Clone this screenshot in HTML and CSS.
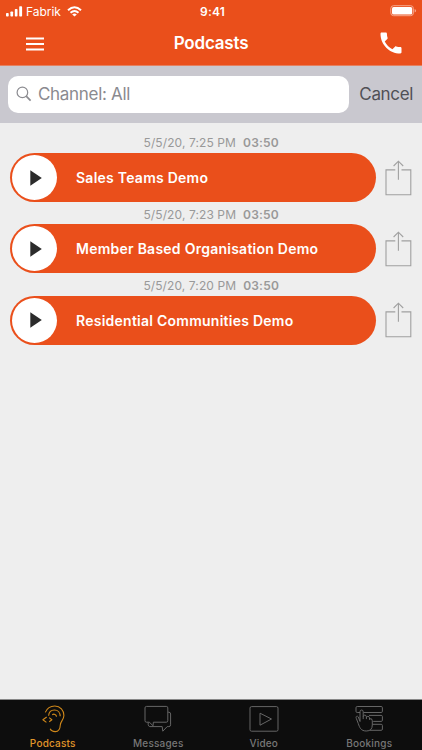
FILE: index.html
```html
<!DOCTYPE html>
<html lang="en">
<head>
<meta charset="utf-8">
<title>Podcasts</title>
<link rel="stylesheet" href="styles.css">
</head>
<body>
<div class="app">
  <header class="top">
    <div class="status">
      <div class="carrier">
        <svg width="17" height="11" viewBox="0 0 17 11" fill="#fff"><rect x="0" y="7" width="2.7" height="3.6" rx=".8"/><rect x="4.4" y="5.4" width="2.7" height="5.2" rx=".8"/><rect x="8.8" y="3" width="2.7" height="7.6" rx=".8"/><rect x="13.2" y="0.2" width="2.9" height="10.4" rx=".8"/></svg>
        <span class="carrier-name">Fabrik</span>
        <svg width="15" height="11" viewBox="0 0 15 11" fill="none" stroke="#fff" stroke-width="2"><path d="M1 4.2Q7.5-1.8 14 4.2"/><path d="M3.5 6.8Q7.5 3.2 11.5 6.8"/><path d="M7.5 10.6L5.2 8.4Q7.5 6.6 9.8 8.4Z" fill="#fff" stroke="none"/></svg>
      </div>
      <div class="clock">9:41</div>
      <svg class="battery" width="27" height="12" viewBox="0 0 27 12"><rect x=".8" y=".7" width="22.6" height="10" rx="2.8" fill="none" stroke="#f7a78c" stroke-width="1"/><rect x="2" y="1.9" width="20.2" height="7.6" rx="1.6" fill="#fff"/><path d="M24.6 4v3.6q1.5-.6 1.5-1.8T24.6 4z" fill="#f7a78c"/></svg>
    </div>
    <div class="nav">
      <svg width="20" height="14" viewBox="0 0 20 14" stroke="#fff" stroke-width="2"><path d="M1 1.6h18M1 7h18M1 12.4h18"/></svg>
      <h1>Podcasts</h1>
      <svg class="phone" width="28" height="28" viewBox="0 0 24 24" fill="#fff"><path d="M6.62 10.79c1.44 2.83 3.76 5.14 6.59 6.59l2.2-2.2c.27-.27.67-.36 1.02-.24 1.12.37 2.33.57 3.57.57.55 0 1 .45 1 1V20c0 .55-.45 1-1 1-9.39 0-17-7.61-17-17 0-.55.45-1 1-1h3.5c.55 0 1 .45 1 1 0 1.25.2 2.45.57 3.57.11.35.03.74-.25 1.02l-2.2 2.2z"/></svg>
    </div>
  </header>
  <div class="search">
    <div class="field">
      <svg width="16" height="16" viewBox="0 0 16 16" fill="none" stroke="#8b8b90" stroke-width="1.2"><circle cx="6.4" cy="6.4" r="5.3"/><path d="M10.2 10.2L14.6 14.6" stroke-width="1.7"/></svg>
      <span>Channel: All</span>
    </div>
    <span class="cancel">Cancel</span>
  </div>
  <main>
    <section class="item">
      <div class="meta"><span>5/5/20, 7:25 PM</span><b>03:50</b></div>
      <div class="row">
        <div class="pill"><div class="play"><svg width="12" height="16" viewBox="0 0 12 16"><path d="M.3.3L11.8 8 .3 15.7z" fill="#2b2b2b"/></svg></div><span>Sales Teams Demo</span></div>
        <svg class="share" width="27" height="36" viewBox="0 0 27 36"><path d="M10.3 9.9H1v24.8h24.8V9.9h-9.3M13.4 19.8V1.2M8.6 6l4.8-4.8L18.2 6"/></svg>
      </div>
    </section>
    <section class="item">
      <div class="meta"><span>5/5/20, 7:23 PM</span><b>03:50</b></div>
      <div class="row">
        <div class="pill"><div class="play"><svg width="12" height="16" viewBox="0 0 12 16"><path d="M.3.3L11.8 8 .3 15.7z" fill="#2b2b2b"/></svg></div><span>Member Based Organisation Demo</span></div>
        <svg class="share" width="27" height="36" viewBox="0 0 27 36"><path d="M10.3 9.9H1v24.8h24.8V9.9h-9.3M13.4 19.8V1.2M8.6 6l4.8-4.8L18.2 6"/></svg>
      </div>
    </section>
    <section class="item">
      <div class="meta"><span>5/5/20, 7:20 PM</span><b>03:50</b></div>
      <div class="row">
        <div class="pill"><div class="play"><svg width="12" height="16" viewBox="0 0 12 16"><path d="M.3.3L11.8 8 .3 15.7z" fill="#2b2b2b"/></svg></div><span>Residential Communities Demo</span></div>
        <svg class="share" width="27" height="36" viewBox="0 0 27 36"><path d="M10.3 9.9H1v24.8h24.8V9.9h-9.3M13.4 19.8V1.2M8.6 6l4.8-4.8L18.2 6"/></svg>
      </div>
    </section>
  </main>
  <nav class="tabs">
    <div class="tab active"><svg width="30" height="28" viewBox="0 0 30 28"><path d="M7.3 7.4C9 3.2 12.8 1 16.8 1c5.4 0 9.2 4.2 9.1 9.6-.1 4.2-3.4 5.6-3.6 9.4-.2 4.2-1.6 6.6-5 6.6-2.4 0-4.4-1-5.1-2.8"/><path d="M10.6 10.7C10.9 7.2 13.4 5 16.5 5c3.4 0 5.7 2.7 5.7 6.2M14.2 9.7c1.8-1.2 4.2-.2 4.3 2M8.7 12l-3.8 2.7 3.5 2.7M11.2 12.6l2.7 2.1-2.7 2.1"/></svg><span>Podcasts</span></div>
    <div class="tab"><svg width="30" height="28" viewBox="0 0 30 28"><path d="M3.5 1.4h19.8q1.5 0 1.5 1.5v12.8q0 1.5-1.5 1.5H10.4l-.4 3.6-3.6-3.6H3.5Q2 17.2 2 15.7V2.9q0-1.5 1.5-1.5zM24.8 7.2h1q1.8 0 1.8 1.8v10.8q0 1.8-1.8 1.8h-1.6l-4.4 4.6-.6-4.6H6.8Q5.2 21.2 5.2 19.6v-2.2"/></svg><span>Messages</span></div>
    <div class="tab"><svg width="30" height="28" viewBox="0 0 30 28"><rect x="1" y="1.6" width="28" height="24.6" rx="1.5"/><path d="M11 8.2v12L22.5 14z"/></svg><span>Video</span></div>
    <div class="tab"><svg width="30" height="28" viewBox="0 0 30 28"><path d="M6 7.5H3.2Q2 7.5 2 6.3V2.7q0-1.2 1.2-1.2h24q1.2 0 1.2 1.2v3.6q0 1.2-1.2 1.2H9.5M15 10.4h12.2q1.2 0 1.2 1.2v3.6q0 1.2-1.2 1.2h-8M18.5 19.3h8.7q1.2 0 1.2 1.2v3.6q0 1.2-1.2 1.2H16M6 16.5V6.8q0-1.8 1.6-1.8t1.6 1.8v7.3m0-2.3q.2-1.7 1.6-1.7t1.6 1.7v2.3m0-1.5q.2-1.3 1.5-1.3t1.6 1.5v2m0-1q2.8-.8 2.8 2v4.2q0 6-6 6c-5.5 0-6.7-3.6-8-7.4l-2-5.2c-.8-2 .8-3 2-1.5L6 16.5"/></svg><span>Bookings</span></div>
  </nav>
</div>
</body>
</html>
```
FILE: styles.css
```css
* { box-sizing: border-box; }
body { margin: 0; font-family: Inter, "Liberation Sans", sans-serif; }
svg { display: block; flex: none; }
.app { width: 422px; height: 750px; display: flex; flex-direction: column; background: #eee; overflow: hidden; white-space: nowrap; }
.top { height: 66px; background: #ea4f1b; color: #fff; flex: none; border-bottom: 1px solid #e5805f; }
.status { height: 22px; display: grid; grid-template-columns: 1fr auto 1fr; align-items: center; padding: 0 6px; }
.carrier { display: flex; align-items: center; font-size: 12px; }
.carrier-name { margin: 0 6px 0 3px; letter-spacing: -.05px; }
.clock { margin-left: 3px; font-size: 12px; font-weight: 600; letter-spacing: .2px; }
.battery { justify-self: end; margin-right: -1px; }
.nav { height: 43px; display: grid; grid-template-columns: 1fr auto 1fr; align-items: center; padding: 0 17px 0 25px; }
.nav h1 { margin: -2px 0 0 -8px; font-size: 17px; font-weight: 600; letter-spacing: -.2px; }
.phone { justify-self: end; margin-top: -2px; }
.search { height: 57px; flex: none; background: #c9c8cf; display: flex; align-items: center; padding: 0 9px 1px 8px; justify-content: space-between; }
.field { width: 341px; height: 37px; border-radius: 10px; background: #fff; display: flex; align-items: center; padding-left: 8px; gap: 6px; font-size: 17px; color: #8a8a8f; }
.field span { letter-spacing: -.3px; }
.cancel { font-size: 17px; color: #505056; letter-spacing: -.35px; }
main { flex: 1; padding: 7.7px 10px 0 10.4px; }
.item { height: 71.33px; }
.meta { height: 22.33px; display: flex; justify-content: center; align-items: center; gap: 7px; padding-top: 2px; font-size: 12px; letter-spacing: .1px; color: #999; }
.meta b { font-weight: 600; letter-spacing: .2px; }
.row { height: 49px; display: flex; justify-content: space-between; align-items: center; }
.pill { width: 365.6px; height: 49px; border-radius: 25px; background: #ea4f1b; display: flex; align-items: center; padding-left: 2px; color: #fff; font-size: 14px; font-weight: 600; letter-spacing: .25px; }
.play { width: 45px; height: 45px; border-radius: 50%; background: #fff; display: flex; align-items: center; justify-content: center; padding-left: 2px; margin-right: 18.6px; }
.share { fill: none; stroke: #a0a0a0; stroke-width: 1.1; margin-right: -.4px; }
.tabs { height: 51px; flex: none; background: #0d0d0d; border-top: 1px solid #888; display: grid; grid-template-columns: repeat(4, 1fr); color: #777; }
.tab { display: flex; flex-direction: column; align-items: center; padding-top: 5px; font-size: 10px; font-weight: 500; letter-spacing: .2px; }
.tab svg { fill: none; stroke: #666; stroke-width: 1; stroke-linejoin: round; }
.tab span { line-height: 12px; margin-top: 3.5px; }
.tab.active { color: #e0962a; }
.tab.active svg { stroke: #d0881a; stroke-width: 1.1; }
```
